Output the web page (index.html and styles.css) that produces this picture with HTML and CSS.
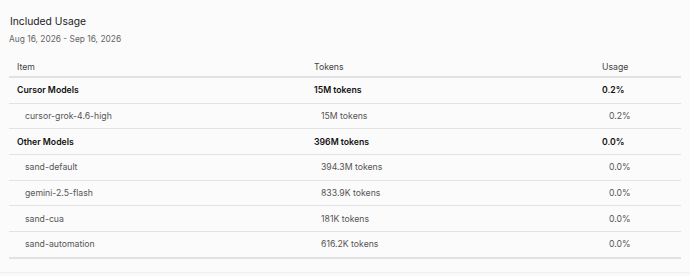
FILE: index.html
```html
<!DOCTYPE html>
<html>
<head>
<meta charset="utf-8">
<link rel="stylesheet" href="styles.css">
</head>
<body>
<div class="panel">
  <h2 class="title">Included Usage</h2>
  <div class="range">Aug 16, 2026 - Sep 16, 2026</div>
  <div class="table">
    <div class="row head"><div>Item</div><div>Tokens</div><div>Usage</div></div>
    <div class="row group"><div>Cursor Models</div><div>15M tokens</div><div>0.2%</div></div>
    <div class="row sub"><div>cursor-grok-4.6-high</div><div>15M tokens</div><div>0.2%</div></div>
    <div class="row group"><div>Other Models</div><div>396M tokens</div><div>0.0%</div></div>
    <div class="row sub"><div>sand-default</div><div>394.3M tokens</div><div>0.0%</div></div>
    <div class="row sub"><div>gemini-2.5-flash</div><div>833.9K tokens</div><div>0.0%</div></div>
    <div class="row sub"><div>sand-cua</div><div>181K tokens</div><div>0.0%</div></div>
    <div class="row sub last"><div>sand-automation</div><div>616.2K tokens</div><div>0.0%</div></div>
  </div>
</div>
<div class="footer"></div>
</body>
</html>
```
FILE: styles.css
```css
html, body {
  margin: 0;
  padding: 0;
  background: #fbfbfb;
  font-family: Inter, "Liberation Sans", sans-serif;
}
.panel {
  padding: 13px 9px 0 9px;
  height: 259px;
}
.title {
  margin: 0 0 0 1px;
  font-size: 10.3px;
  font-weight: 400;
  color: #1c1c1c;
  line-height: 16px;
}
.range {
  margin-top: 3px;
  font-size: 8.4px;
  color: #666;
  line-height: 14px;
}
.table {
  margin-top: 11px;
}
.row {
  display: grid;
  grid-template-columns: 297px 288px 1fr;
  height: 24.7px;
  align-items: center;
  border-bottom: 1px solid #e3e3e3;
  font-size: 8.7px;
}
.row > div {
  padding-left: 8px;
}
.head {
  height: 19px;
  border-bottom: 2px solid #e2e2e2;
  color: #444;
}
.group {
  font-weight: 600;
  color: #111;
}
.sub {
  color: #555;
}
.sub > div:first-child {
  padding-left: 16px;
}
.sub > div {
  padding-left: 15px;
}
.last {
  border-bottom: 2px solid #e2e2e2;
}
.footer {
  border-top: 1px solid #efefef;
  height: 4px;
  background: #fafafa;
}
```
